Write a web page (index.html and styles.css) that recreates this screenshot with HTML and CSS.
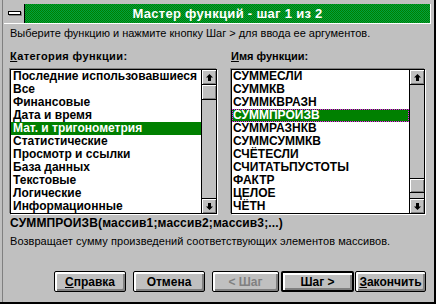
FILE: index.html
```html
<!DOCTYPE html>
<html lang="ru">
<head>
<meta charset="utf-8">
<title>Мастер функций</title>
<link rel="stylesheet" href="styles.css">
</head>
<body>
<div class="window">
  <div class="titlebar">
    <div class="sysmenu"><span class="sysbar"></span></div>
    <div class="title">Мастер функций - шаг 1 из 2</div>
  </div>
  <p class="hint">Выберите функцию и нажмите кнопку Шаг &gt; для ввода ее аргументов.</p>
  <div class="lists">
    <div class="group group-cat">
      <div class="label"><u>К</u>атегория функции:</div>
      <div class="listbox">
        <ul class="items items-cat">
          <li>Последние использовавшиеся</li>
          <li>Все</li>
          <li>Финансовые</li>
          <li>Дата и время</li>
          <li class="sel">Мат. и тригонометрия</li>
          <li>Статистические</li>
          <li>Просмотр и ссылки</li>
          <li>База данных</li>
          <li>Текстовые</li>
          <li>Логические</li>
          <li>Информационные</li>
        </ul>
        <div class="scrollbar">
          <div class="arrow arrow-up"><svg width="7" height="7" viewBox="0 0 7 7"><path d="M3.5 0 L7 3.5 L5 3.5 L5 7 L2 7 L2 3.5 L0 3.5 Z" fill="#000"/></svg></div>
          <div class="trough"><div class="thumb"></div></div>
          <div class="arrow arrow-down"><svg width="7" height="7" viewBox="0 0 7 7"><path d="M3.5 7 L7 3.5 L5 3.5 L5 0 L2 0 L2 3.5 L0 3.5 Z" fill="#000"/></svg></div>
        </div>
      </div>
    </div>
    <div class="group group-fn">
      <div class="label"><u>И</u>мя функции:</div>
      <div class="listbox">
        <ul class="items items-fn">
          <li>СУММЕСЛИ</li>
          <li>СУММКВ</li>
          <li>СУММКВРАЗН</li>
          <li class="sel focus">СУММПРОИЗВ</li>
          <li>СУММРАЗНКВ</li>
          <li>СУММСУММКВ</li>
          <li>СЧЁТЕСЛИ</li>
          <li>СЧИТАТЬПУСТОТЫ</li>
          <li>ФАКТР</li>
          <li>ЦЕЛОЕ</li>
          <li>ЧЁТН</li>
        </ul>
        <div class="scrollbar">
          <div class="arrow arrow-up"><svg width="7" height="7" viewBox="0 0 7 7"><path d="M3.5 0 L7 3.5 L5 3.5 L5 7 L2 7 L2 3.5 L0 3.5 Z" fill="#000"/></svg></div>
          <div class="trough trough-end"><div class="thumb"></div></div>
          <div class="arrow arrow-down"><svg width="7" height="7" viewBox="0 0 7 7"><path d="M3.5 7 L7 3.5 L5 3.5 L5 0 L2 0 L2 3.5 L0 3.5 Z" fill="#000"/></svg></div>
        </div>
      </div>
    </div>
  </div>
  <div class="sig">СУММПРОИЗВ(массив1;массив2;массив3;...)</div>
  <p class="desc">Возвращает сумму произведений соответствующих элементов массивов.</p>
  <div class="buttons">
    <button class="btn btn-help"><u>С</u>правка</button>
    <button class="btn btn-cancel">Отмена</button>
    <button class="btn btn-back" disabled>&lt; Шаг</button>
    <button class="btn btn-next btn-default">Шаг &gt;</button>
    <button class="btn btn-finish"><u>З</u>акончить</button>
  </div>
</div>
</body>
</html>
```

FILE: styles.css
```css
* { box-sizing: border-box; margin: 0; padding: 0; }
html, body { width: 436px; height: 304px; overflow: hidden; }
body {
  background: #c0c0c0;
  font-family: "Liberation Sans", Arial, sans-serif;
  color: #000;
}
.window {
  width: 436px;
  height: 304px;
  background: #c0c0c0;
  border-right: 2px solid #000;
  border-bottom: 2px solid #000;
  box-shadow: inset 2px 0 0 #c0c0c0, inset 3px 0 0 #808080;
  display: flex;
  flex-direction: column;
}
.titlebar {
  display: flex;
  margin: 4px 0 0 4px;
  width: 427px;
  height: 20px;
  border-bottom: 1px solid #fff;
  border-right: 1px solid #fff;
}
.sysmenu {
  width: 21px;
  background: #c0c0c0;
  border-right: 1px solid #000;
  display: flex;
  align-items: center;
  justify-content: center;
}
.sysbar {
  display: block;
  width: 13px;
  height: 4px;
  background: #fff;
  border: 1px solid #000;
  box-shadow: 1px 1px 0 #808080;
  margin-top: -1px;
}
.title {
  flex: 1;
  background: repeating-conic-gradient(#008000 0 25%, #00a040 0 50%) 0 0 / 2px 2px;
  color: #fff;
  font-weight: bold;
  font-size: 13px;
  line-height: 19px;
  text-align: center;
  letter-spacing: 0.3px;
}
.hint {
  font-size: 11px;
  line-height: 13px;
  margin: 3px 0 0 10px;
}
.lists {
  display: flex;
  align-items: flex-start;
  margin: 10px 0 0 10px;
  gap: 14px;
}
.label {
  font-size: 11px;
  font-weight: bold;
  line-height: 13px;
  margin-bottom: 6px;
}
.group-cat .label { letter-spacing: 0.4px; }
.listbox {
  display: flex;
  background: #fff;
  border: 1px solid #000;
  box-shadow: -1px -1px 0 #808080, 1px 1px 0 #fff;
}
.group-cat .listbox { width: 207px; }
.group-fn .listbox { width: 194px; margin-top: 1px; }
.items {
  list-style: none;
  flex: 1;
  font-size: 12px;
  font-weight: bold;
  line-height: 13px;
  white-space: nowrap;
  overflow: hidden;
}
.items li { height: 13px; padding-left: 2px; }
.items-fn li { padding-left: 1px; }
.items li.sel { background: #008000; color: #fff; }
.items li.focus { outline: 1px dotted #ff00ff; outline-offset: -1px; }
.scrollbar {
  width: 15px;
  border-left: 1px solid #000;
  display: flex;
  flex-direction: column;
  background: #c0c0c0;
}
.arrow {
  display: flex;
  align-items: center;
  justify-content: center;
  background: #c0c0c0;
  box-shadow: inset 1px 1px 0 #fff, inset -1px -1px 0 #808080;
}
.arrow-up { border-bottom: 1px solid #000; height: 15px; }
.arrow-down { border-top: 1px solid #000; height: 15px; }
.trough {
  flex: 1;
  display: flex;
  flex-direction: column;
}
.trough-end { justify-content: flex-end; padding-bottom: 5px; }
.thumb {
  height: 15px;
  background: #c0c0c0;
  border-bottom: 1px solid #000;
  box-shadow: inset 1px 1px 0 #fff, inset -1px -1px 0 #808080;
}
.trough-end .thumb { border-top: 1px solid #000; }
.sig {
  font-size: 12px;
  font-weight: bold;
  line-height: 13px;
  letter-spacing: 0.15px;
  margin: 3px 0 0 10px;
}
.desc {
  font-size: 11px;
  line-height: 13px;
  letter-spacing: 0.05px;
  margin: 5px 0 0 10px;
}
.buttons {
  display: flex;
  margin: 23px 0 0 54px;
}
.btn {
  font-family: "Liberation Sans", Arial, sans-serif;
  font-size: 12px;
  font-weight: bold;
  color: #000;
  height: 21px;
  background: #c0c0c0;
  border: 1px solid #000;
  border-radius: 2px;
  box-shadow: inset 1px 1px 0 #fff, inset 2px 2px 0 #fff, inset -1px -1px 0 #808080, inset -2px -2px 0 #808080;
  padding: 0;
}
.btn-help { width: 72px; margin-right: 7px; }
.btn-cancel { width: 72px; margin-right: 7px; }
.btn-back { width: 67px; margin-right: 2px; color: #808080; }
.btn-default { width: 73px; margin-right: 1px; border-width: 2px; }
.btn-finish { width: 71px; }
```
